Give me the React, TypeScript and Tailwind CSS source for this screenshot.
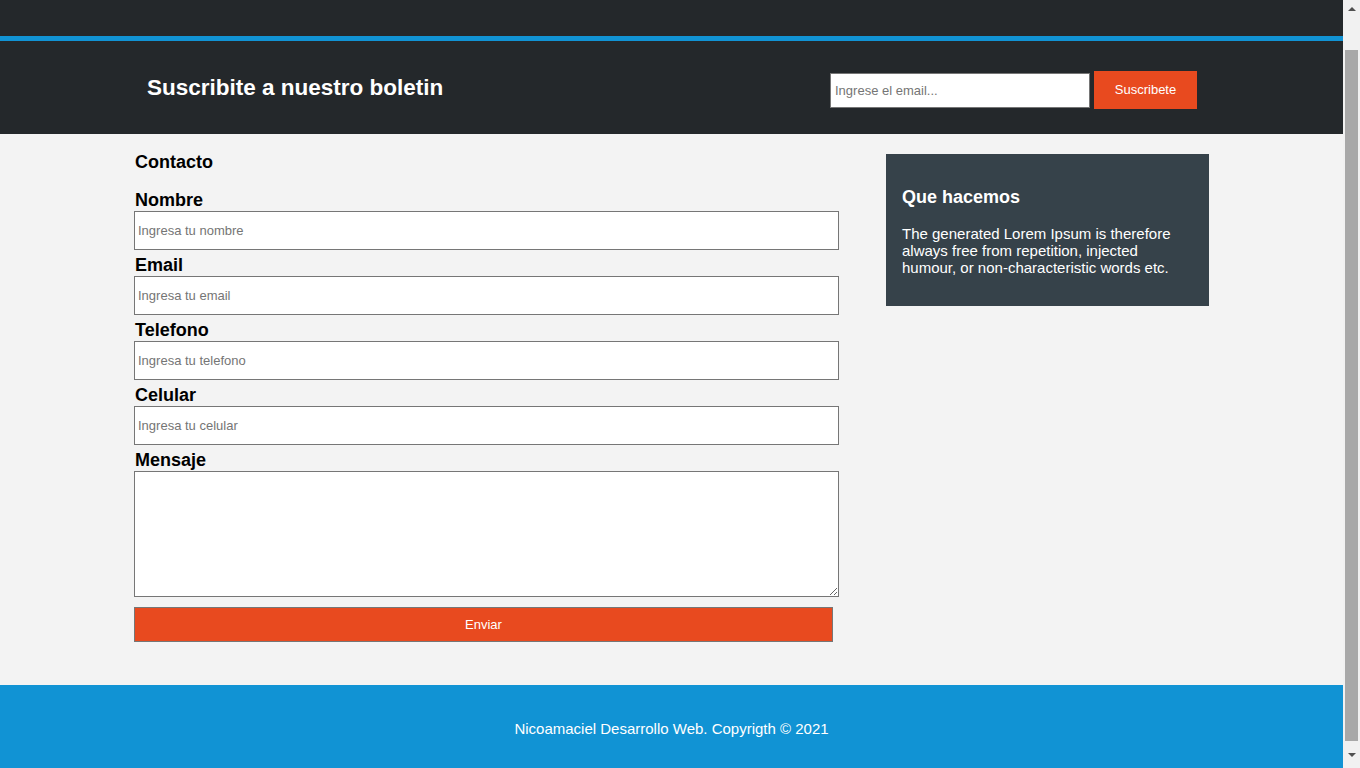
import { useEffect, useRef } from "react";

const fields = [
  { label: "Nombre", placeholder: "Ingresa tu nombre", type: "text" },
  { label: "Email", placeholder: "Ingresa tu email", type: "email" },
  { label: "Telefono", placeholder: "Ingresa tu telefono", type: "tel" },
  { label: "Celular", placeholder: "Ingresa tu celular", type: "tel" },
];

function Scrollbar() {
  return (
    <div className="flex w-[17px] shrink-0 flex-col items-center bg-[#f1f1f1]">
      <div className="flex h-[17px] items-center justify-center">
        <div className="h-0 w-0 border-x-[4px] border-b-[4px] border-x-transparent border-b-[#505050]" />
      </div>
      <div className="mt-[33px] h-[691px] w-[13px] bg-[#a8a8a8]" />
      <div className="flex flex-1 items-center justify-center">
        <div className="h-0 w-0 border-x-[4px] border-t-[4px] border-x-transparent border-t-[#505050]" />
      </div>
    </div>
  );
}

export default function App() {
  const scroller = useRef<HTMLDivElement>(null);

  useEffect(() => {
    if (scroller.current) scroller.current.scrollTop = 37;
  }, []);

  return (
    <div className="flex h-screen font-['Liberation_Sans',Arial,sans-serif]">
      <div ref={scroller} className="flex-1 overflow-y-scroll bg-[#f3f3f3]">
        {/* bottom of the nav bar */}
        <div className="h-[73px] bg-[#24282b]" />
        <div className="h-[5px] bg-[#1193d4]" />

        <section className="bg-[#24282b]">
          <div className="mx-auto flex h-[93px] w-[1075px] items-center justify-between pl-[13px] pr-[12px]">
            <h2 className="text-[22.5px] font-bold text-white">
              Suscribite a nuestro boletin
            </h2>
            <form className="flex items-center gap-[4px] pt-[5px]">
              <input
                type="email"
                placeholder="Ingrese el email..."
                className="h-[35px] w-[260px] border border-[#767676] bg-white px-[4px] text-[13px] text-black outline-none placeholder:text-[#757575]"
              />
              <button
                type="button"
                className="h-[38px] w-[103px] bg-[#e84a1f] text-[13px] text-white"
              >
                Suscribete
              </button>
            </form>
          </div>
        </section>

        <main className="mx-auto flex w-[1075px] items-start justify-between pb-[43px] pt-[18px]">
          <form className="w-[705px]">
            <h3 className="pl-px text-[18px] font-bold leading-[21px] text-black">
              Contacto
            </h3>
            <div className="mt-[16px] flex flex-col gap-[4px]">
              {fields.map((f) => (
                <label key={f.label} className="block">
                  <span className="block pl-px text-[18px] font-bold leading-[22px] text-black">
                    {f.label}
                  </span>
                  <input
                    type={f.type}
                    placeholder={f.placeholder}
                    className="block h-[39px] w-full border border-[#767676] bg-white px-[3px] text-[13px] text-black outline-none placeholder:text-[#757575]"
                  />
                </label>
              ))}
              <label className="block">
                <span className="block pl-px text-[18px] font-bold leading-[22px] text-black">
                  Mensaje
                </span>
                <textarea className="block h-[126px] w-full border border-[#767676] bg-white p-[3px] text-[13px] outline-none" />
              </label>
            </div>
            <button
              type="button"
              className="mt-[10px] block h-[35px] w-[699px] border border-[#767676] bg-[#e84a1f] text-[13px] text-white"
            >
              Enviar
            </button>
          </form>

          <aside className="mt-[2px] w-[323px] bg-[#36424a] px-[16px] pb-[30px] pt-[33px] text-white">
            <h3 className="text-[18px] font-bold leading-[21px]">Que hacemos</h3>
            <p className="mt-[17px] text-[15px] leading-[17px]">
              The generated Lorem Ipsum is therefore always free from repetition,
              injected humour, or non-characteristic words etc.
            </p>
          </aside>
        </main>

        <footer className="flex h-[94px] justify-center bg-[#1193d4] pt-[35px]">
          <p className="text-[15px] leading-[17px] text-white">
            Nicoamaciel Desarrollo Web. Copyrigth © 2021
          </p>
        </footer>
      </div>
      <Scrollbar />
    </div>
  );
}
